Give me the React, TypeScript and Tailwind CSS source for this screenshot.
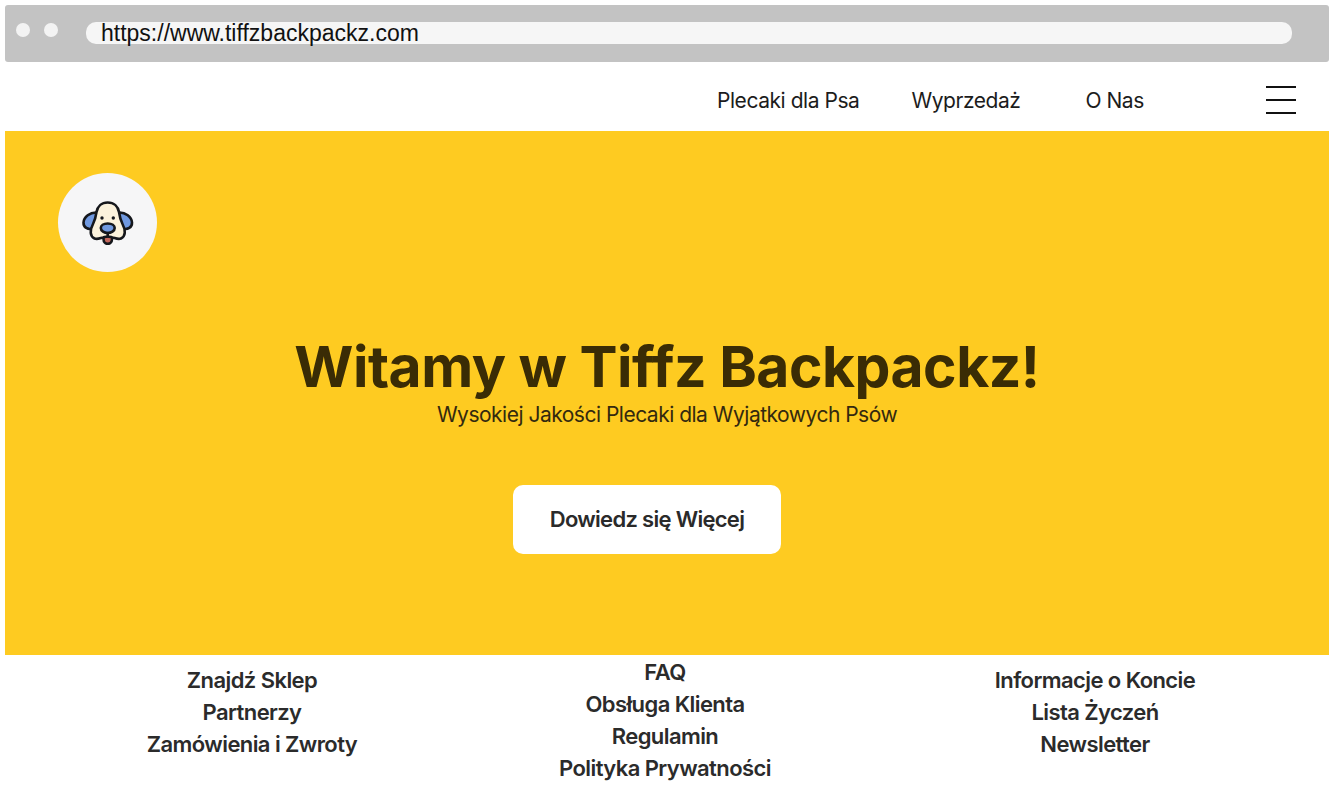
const sans = "font-['Inter','Liberation_Sans',sans-serif]";

const footerColumns = [
  { links: ['Znajdź Sklep', 'Partnerzy', 'Zamówienia i Zwroty'], className: 'ml-[47px] pt-[9px]' },
  { links: ['FAQ', 'Obsługa Klienta', 'Regulamin', 'Polityka Prywatności'], className: 'ml-[13px] pt-[1px]' },
  { links: ['Informacje o Koncie', 'Lista Życzeń', 'Newsletter'], className: 'ml-[30px] pt-[9px]' },
];

function DogLogo() {
  return (
    <svg width="52" height="44" viewBox="0 0 52 44" fill="none" stroke="#15171c" strokeWidth="2.6" strokeLinejoin="round" strokeLinecap="round">
      {/* ears */}
      <path d="M15 11.500 C8 11 1.800 16 1.500 21.500 C1.300 26.500 6 29 10.500 27.500 L15 20 Z" fill="#7099e0" />
      <path d="M36.500 11.500 C43.500 11 49.700 16 50 21.500 C50.200 26.500 45.500 29 41 27.500 L36.500 20 Z" fill="#7099e0" />
      {/* tongue */}
      <path d="M21.500 34 L21.500 38 C21.500 44.500 30 44.500 30 38 L30 34 Z" fill="#c4675c" />
      {/* head */}
      <path d="M25.700 1.500 C19.500 1.500 15.500 5.500 14.500 11 C13.800 16 12.800 19.500 11 23 C7.500 29.500 8 35.500 12.500 37.500 C15.500 38.800 18.500 37 21 36.500 C23 36 24 35.500 25.700 35.500 C27.500 35.500 28.500 36 30.500 36.500 C33 37 36 38.800 39 37.500 C43.500 35.500 44 29.500 40.500 23 C38.700 19.500 37.700 16 37 11 C36 5.500 32 1.500 25.700 1.500 Z" fill="#fbf2dc" />
      {/* nose */}
      <path d="M25.700 22.500 C21.500 22.500 18.800 24.500 18.800 27 C18.800 30 22.500 32 25.700 32 C29 32 32.700 30 32.700 27 C32.700 24.500 30 22.500 25.700 22.500 Z" fill="#7099e0" />
      <path d="M25.700 32 L25.700 35.500" />
      {/* eyes */}
      <circle cx="20" cy="17" r="1.700" fill="#15171c" stroke="none" />
      <circle cx="31.300" cy="17" r="1.700" fill="#15171c" stroke="none" />
    </svg>
  );
}

export default function App() {
  return (
    <div className={`h-[800px] w-[1338px] overflow-hidden bg-white pl-[5px] pr-[9px] pt-[5px] ${sans}`}>
      {/* Browser bar */}
      <div className="flex h-[57px] items-start rounded-[3px] bg-[#c3c3c3] pl-[11px] pt-[17px]">
        <span className="mt-[1px] h-[14px] w-[14px] rounded-full bg-[#f3f3f3]" />
        <span className="ml-[14px] mt-[1px] h-[14px] w-[14px] rounded-full bg-[#f3f3f3]" />
        <div className="ml-[28px] flex h-[22px] w-[1206px] items-center rounded-[10px] bg-[#f6f6f6] pl-[15px] font-['Liberation_Sans',sans-serif] text-[23px] leading-[22px] text-[#111]">
          https://www.tiffzbackpackz.com
        </div>
      </div>

      {/* Nav */}
      <nav className="flex h-[69px] items-center text-[21px] tracking-[-0.45px] text-[#1c1c1c]">
        <span className="ml-[712px] mt-[9px]">Plecaki dla Psa</span>
        <span className="ml-[52px] mt-[9px]">Wyprzedaż</span>
        <span className="ml-[65px] mt-[9px]">O Nas</span>
        <div className="ml-[122px] mt-[6px] flex h-[28px] w-[30px] flex-col justify-between">
          <span className="h-[2px] bg-[#111]" />
          <span className="h-[2px] bg-[#111]" />
          <span className="h-[2px] bg-[#111]" />
        </div>
      </nav>

      {/* Hero */}
      <section className="flex h-[524px] flex-col bg-[#fecb21] pl-[53px] pt-[42px]">
        <div className="flex h-[99px] w-[99px] items-center justify-center rounded-full bg-[#f6f6f7]">
          <DogLogo />
        </div>
        <h1 className="-ml-[53px] mt-[59px] text-center text-[57px] font-bold leading-[72px] tracking-[-0.5px] text-[#3a2c05]">
          Witamy w Tiffz Backpackz!
        </h1>
        <p className="-ml-[53px] -mt-[1px] text-center text-[21px] leading-[26px] tracking-[-0.5px] text-[#33290f]">
          Wysokiej Jakości Plecaki dla Wyjątkowych Psów
        </p>
        <button className="ml-[455px] mt-[57px] h-[69px] w-[268px] rounded-[10px] bg-white text-[22px] font-semibold tracking-[-0.7px] text-[#2a2a2a]">
          Dowiedz się Więcej
        </button>
      </section>

      {/* Footer links */}
      <footer className="flex items-start">
        {footerColumns.map((col, i) => (
          <ul key={i} className={`w-[400px] text-center text-[22px] font-semibold leading-[32px] tracking-[-0.58px] text-[#2b2b2b] ${col.className}`}>
            {col.links.map(link => (
              <li key={link}>{link}</li>
            ))}
          </ul>
        ))}
      </footer>
    </div>
  );
}
